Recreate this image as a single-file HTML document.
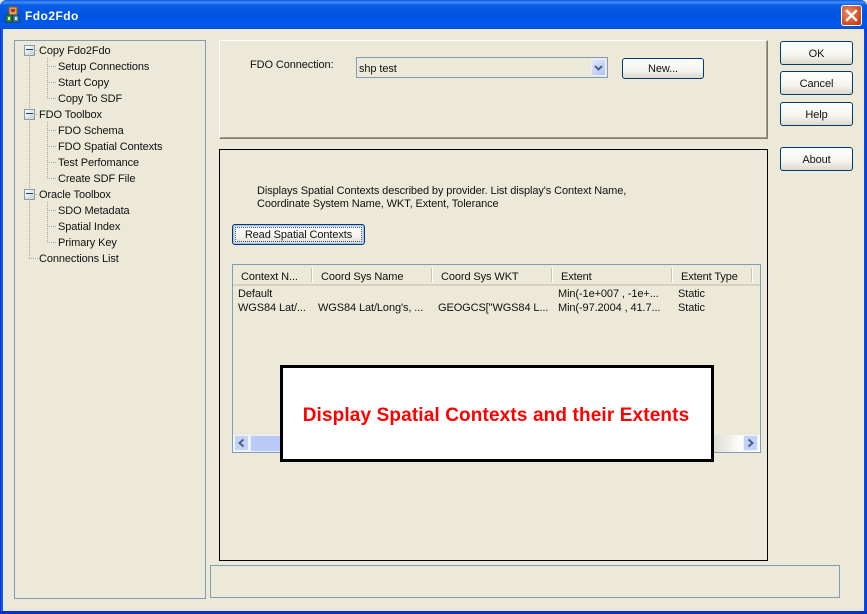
<!DOCTYPE html>
<html>
<head>
<meta charset="utf-8">
<style>
html,body{margin:0;padding:0;width:867px;height:614px;overflow:hidden;background:#ece9d8}
body{position:relative;font-family:"Liberation Sans",sans-serif;font-size:11px;color:#000}
.a{position:absolute;box-sizing:border-box}
.t{position:absolute;white-space:nowrap;line-height:13px;font-size:11px;letter-spacing:-.1px;color:#111;margin-top:2px}
.b{position:absolute;box-sizing:border-box;border:1px solid #003c74;border-radius:3px;background:linear-gradient(#fff 0%,#f5f4ee 60%,#dcd8cc 100%);text-align:center;font-size:11px;letter-spacing:-.1px;color:#111;padding-top:1px}
.hsep{position:absolute;top:268px;width:1px;height:14px;background:#c9c6b4;border-right:1px solid #fff}
.d{position:absolute;background-image:linear-gradient(#a8a89c 50%,transparent 50%);background-size:1px 2px;width:1px}
.h{position:absolute;background-image:linear-gradient(90deg,#a8a89c 50%,transparent 50%);background-size:2px 1px;height:1px}
.m{position:absolute;left:24px;width:11px;height:11px;box-sizing:border-box;border:1px solid #7f9db9;background:linear-gradient(135deg,#fff,#cfcbbd)}
.m:after{content:"";position:absolute;left:1px;top:3px;width:7px;height:1px;background:#1a3c8c}
</style>
</head>
<body>
<!-- title bar -->
<div class="a" style="left:0;top:0;width:867px;height:29px;background:linear-gradient(#0a5ae0 0%,#3f8cf3 8%,#0a5de6 18%,#0054e3 55%,#0058ee 85%,#0350d6 100%);border-radius:6px 6px 0 0"></div>
<svg class="a" style="left:5px;top:6px" width="16" height="18" viewBox="0 0 16 18">
<rect x="4" y="1" width="8" height="8" fill="#e8a050" stroke="#8a5a20"/>
<rect x="6" y="3" width="4" height="3" fill="#c03020"/>
<rect x="1" y="9" width="6" height="7" fill="#2f8f3f" stroke="#1b4a20"/>
<rect x="8" y="9" width="6" height="7" fill="#3a8fb0" stroke="#1b3a50"/>
<rect x="3" y="11" width="2" height="3" fill="#e8e8c0"/>
<rect x="10" y="11" width="2" height="3" fill="#e8e8c0"/>
</svg>
<div class="t" style="left:25px;top:7px;color:#fff;font-weight:bold;font-size:12px;letter-spacing:.45px;line-height:15px">Fdo2Fdo</div>
<div class="a" style="left:841px;top:5px;width:21px;height:21px;border:1px solid #fff;border-radius:3px;background:radial-gradient(circle at 35% 35%,#e98a68,#d0481f 70%,#b93a14)"></div>
<svg class="a" style="left:841px;top:5px" width="21" height="21" viewBox="0 0 21 21"><path d="M6 6L15 15M15 6L6 15" stroke="#fff" stroke-width="2.4" stroke-linecap="square"/></svg>
<!-- window borders -->
<div class="a" style="left:0;top:29px;width:3px;height:585px;background:linear-gradient(90deg,#0831d9,#1660f0 70%,#0855dd)"></div>
<div class="a" style="left:864px;top:29px;width:3px;height:585px;background:linear-gradient(90deg,#0855dd,#0831d9)"></div>
<div class="a" style="left:0;top:611px;width:867px;height:3px;background:#0831c0"></div>

<!-- tree panel -->
<div class="a" style="left:14px;top:40px;width:192px;height:559px;border:1px solid #7f9db9"></div>
<div class="d" style="left:29px;top:55px;height:203px"></div>
<div class="d" style="left:47px;top:58px;height:40px"></div>
<div class="d" style="left:47px;top:122px;height:56px"></div>
<div class="d" style="left:47px;top:202px;height:40px"></div>
<div class="h" style="left:47px;top:66px;width:10px"></div>
<div class="h" style="left:47px;top:82px;width:10px"></div>
<div class="h" style="left:47px;top:98px;width:10px"></div>
<div class="h" style="left:47px;top:130px;width:10px"></div>
<div class="h" style="left:47px;top:146px;width:10px"></div>
<div class="h" style="left:47px;top:162px;width:10px"></div>
<div class="h" style="left:47px;top:178px;width:10px"></div>
<div class="h" style="left:47px;top:210px;width:10px"></div>
<div class="h" style="left:47px;top:226px;width:10px"></div>
<div class="h" style="left:47px;top:242px;width:10px"></div>
<div class="h" style="left:29px;top:258px;width:9px"></div>
<div class="h" style="left:34px;top:50px;width:4px"></div>
<div class="h" style="left:34px;top:114px;width:4px"></div>
<div class="h" style="left:34px;top:194px;width:4px"></div>
<div class="m" style="top:45px"></div>
<div class="m" style="top:109px"></div>
<div class="m" style="top:189px"></div>
<div class="t" style="left:39px;top:43px">Copy Fdo2Fdo</div>
<div class="t" style="left:58px;top:59px">Setup Connections</div>
<div class="t" style="left:58px;top:75px">Start Copy</div>
<div class="t" style="left:58px;top:91px">Copy To SDF</div>
<div class="t" style="left:39px;top:107px">FDO Toolbox</div>
<div class="t" style="left:58px;top:123px">FDO Schema</div>
<div class="t" style="left:58px;top:139px">FDO Spatial Contexts</div>
<div class="t" style="left:58px;top:155px">Test Perfomance</div>
<div class="t" style="left:58px;top:171px">Create SDF File</div>
<div class="t" style="left:39px;top:187px">Oracle Toolbox</div>
<div class="t" style="left:58px;top:203px">SDO Metadata</div>
<div class="t" style="left:58px;top:219px">Spatial Index</div>
<div class="t" style="left:58px;top:235px">Primary Key</div>
<div class="t" style="left:39px;top:251px">Connections List</div>

<!-- top panel -->
<div class="a" style="left:219px;top:40px;width:549px;height:99px;border:1px solid;border-color:#fff #7f7b68 #7f7b68 #fff;box-shadow:inset 0 -1px 0 #a09c8a,inset -1px 0 0 #a09c8a"></div>
<div class="t" style="left:250px;top:57px">FDO Connection:</div>
<div class="a" style="left:356px;top:57px;width:252px;height:21px;border:1px solid #7f9db9"></div>
<div class="t" style="left:359px;top:61px">shp test</div>
<div class="a" style="left:591px;top:59px;width:15px;height:17px;background:linear-gradient(135deg,#dfe8fd,#b1c4f5);border:1px solid #e8eefc;border-radius:1px"></div>
<svg class="a" style="left:591px;top:59px" width="15" height="17" viewBox="0 0 15 17"><path d="M4 7L7.5 10.5L11 7" fill="none" stroke="#4d6185" stroke-width="2"/></svg>
<div class="b" style="left:622px;top:58px;width:82px;height:21px;line-height:19px">New...</div>

<!-- right buttons -->
<div class="b" style="left:780px;top:41px;width:73px;height:24px;line-height:22px">OK</div>
<div class="b" style="left:780px;top:71px;width:73px;height:24px;line-height:22px">Cancel</div>
<div class="b" style="left:780px;top:102px;width:73px;height:24px;line-height:22px">Help</div>
<div class="b" style="left:780px;top:147px;width:73px;height:24px;line-height:22px">About</div>

<!-- main panel -->
<div class="a" style="left:219px;top:149px;width:549px;height:412px;border:1px solid #000"></div>
<div class="t" style="left:257px;top:183px">Displays Spatial Contexts described by provider. List display's Context Name,</div>
<div class="t" style="left:257px;top:196px">Coordinate System Name, WKT, Extent, Tolerance</div>
<div class="b" style="left:232px;top:224px;width:133px;height:21px;line-height:19px;box-shadow:inset 0 0 0 1px #a8c0ee,inset 0 0 0 2px #cfdcf6">Read Spatial Contexts</div>
<div class="a" style="left:235px;top:227px;width:127px;height:15px;border:1px dotted #555"></div>

<!-- list -->
<div class="a" style="left:232px;top:264px;width:529px;height:189px;border:1px solid #7f9db9"></div>
<div class="a" style="left:233px;top:284px;width:527px;height:2px;background:#d6d2c2"></div>
<div class="hsep" style="left:311px"></div>
<div class="hsep" style="left:431px"></div>
<div class="hsep" style="left:551px"></div>
<div class="hsep" style="left:671px"></div>
<div class="hsep" style="left:751px"></div>
<div class="t" style="left:241px;top:269px">Context N...</div>
<div class="t" style="left:321px;top:269px">Coord Sys Name</div>
<div class="t" style="left:441px;top:269px">Coord Sys WKT</div>
<div class="t" style="left:561px;top:269px">Extent</div>
<div class="t" style="left:681px;top:269px">Extent Type</div>
<div class="t" style="left:238px;top:286px">Default</div>
<div class="t" style="left:558px;top:286px">Min(-1e+007 , -1e+...</div>
<div class="t" style="left:678px;top:286px">Static</div>
<div class="t" style="left:238px;top:300px">WGS84 Lat/...</div>
<div class="t" style="left:318px;top:300px">WGS84 Lat/Long's, ...</div>
<div class="t" style="left:438px;top:300px">GEOGCS["WGS84 L...</div>
<div class="t" style="left:558px;top:300px">Min(-97.2004 , 41.7...</div>
<div class="t" style="left:678px;top:300px">Static</div>

<!-- scrollbar -->
<div class="a" style="left:233px;top:435px;width:527px;height:17px;background:linear-gradient(90deg,#f5f4ee 85%,#dcdad0 91%,#fcfcfa 96%)"></div>
<div class="a" style="left:250px;top:435px;width:60px;height:17px;background:#b9caf6;border:1px solid #e8eefc"></div>
<div class="a" style="left:234px;top:435px;width:15px;height:16px;background:#c3d2f8;border:1px solid #eef2fd"></div>
<svg class="a" style="left:234px;top:435px" width="15" height="16" viewBox="0 0 15 16"><path d="M9.5 4.5L5.5 8L9.5 11.5" fill="none" stroke="#4d6185" stroke-width="2"/></svg>
<div class="a" style="left:743px;top:435px;width:15px;height:16px;background:#c3d2f8;border:1px solid #eef2fd"></div>
<svg class="a" style="left:743px;top:435px" width="15" height="16" viewBox="0 0 15 16"><path d="M5.5 4.5L9.5 8L5.5 11.5" fill="none" stroke="#4d6185" stroke-width="2"/></svg>

<!-- overlay -->
<div class="a" style="left:280px;top:365px;width:434px;height:97px;background:#fff;border:3px solid #000"></div>
<div class="t" style="left:280px;top:403px;width:432px;text-align:center;color:#f00;font-weight:bold;font-size:19px;line-height:22px;letter-spacing:.13px">Display Spatial Contexts and their Extents</div>

<!-- status -->
<div class="a" style="left:210px;top:565px;width:630px;height:33px;border:1px solid #7f9db9"></div>
</body>
</html>
